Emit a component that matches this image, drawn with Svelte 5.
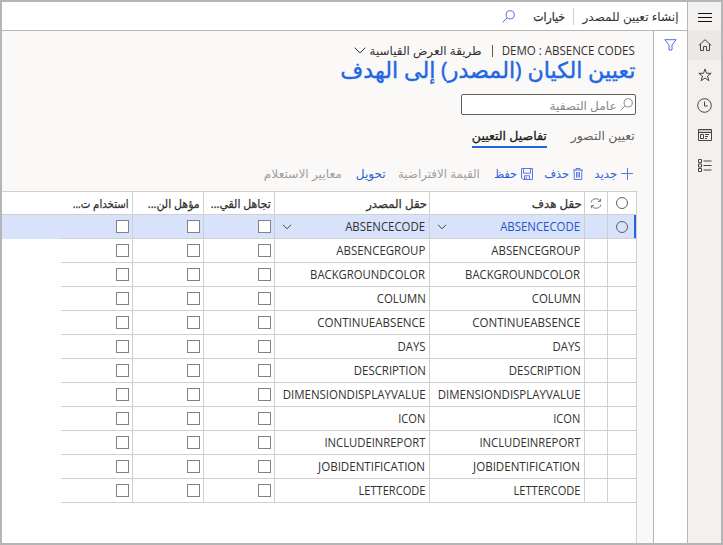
<script>
  const rows = [
    ['ABSENCECODE', 80], ['ABSENCEGROUP', 89], ['BACKGROUNDCOLOR', 115], ['COLUMN', 49],
    ['CONTINUEABSENCE', 108], ['DAYS', 28], ['DESCRIPTION', 72], ['DIMENSIONDISPLAYVALUE', 143],
    ['ICON', 27], ['INCLUDEINREPORT', 101], ['JOBIDENTIFICATION', 107], ['LETTERCODE', 67]
  ];

  // Condenses a label horizontally so that it fills its box exactly.
  function fit(node, width) {
    node.style.transform = `scaleX(${width / node.getBoundingClientRect().width})`;
  }
</script>

{#snippet label(text, width)}
  <span class="label" style="width:{width}px"><span class="ink" use:fit={width}>{text}</span></span>
{/snippet}

{#snippet chevron()}
  <svg class="chev" width="10" height="6" viewBox="0 0 10 6"><path d="M1 .8 5 4.8 9 .8" /></svg>
{/snippet}

{#snippet search()}
  <svg width="13" height="13" viewBox="0 0 13 13"><circle cx="8.2" cy="4.8" r="4.1" /><path d="M5.2 7.8.6 12.4" /></svg>
{/snippet}

<div class="window" dir="rtl">
  <nav class="rail">
    <div class="menu"><svg width="14" height="10" viewBox="0 0 14 10"><path d="M0 .5h14M0 4.5h14M0 8.5h14" /></svg></div>
    <div class="item home"><svg width="14" height="14" viewBox="0 0 14 14"><path d="M.7 7.5 7 1.7 13.3 7.5M2.5 6.1v6.4h3V8.5h3v4h3V6.1" /></svg></div>
    <div class="item"><svg width="14" height="14" viewBox="0 0 14 14"><path d="M7 .9 8.5 5.3h4.7L9.5 8.1l1.4 4.7L7 10l-3.9 2.8 1.4-4.7L.8 5.3h4.7Z" /></svg></div>
    <div class="item"><svg width="15" height="15" viewBox="0 0 15 15"><circle cx="7.5" cy="7.5" r="6.8" /><path d="M7.5 3.5v4.5h3.2" /></svg></div>
    <div class="item"><svg width="14" height="12" viewBox="0 0 14 12"><path class="thin" d="M0 1.8h14" /><path d="M.5.5h13v11H.5ZM.5 3.5h13M2.5 5.5h3v4h-3ZM7 5.5h4M7 7.5h3M7 9.5h2" /></svg></div>
    <div class="item"><svg width="14" height="13" viewBox="0 0 14 13"><path d="M.5.5h3v3h-3ZM.5 5h3v3h-3ZM.5 9.5h3v3h-3ZM5.5 2h8M5.5 6.5h8M5.5 11h8" /></svg></div>
  </nav>

  <div class="body">
    <header class="actions">
      <span class="create">{@render label('إنشاء تعيين للمصدر', 96)}</span>
      <span class="rule"></span>
      <span class="options">{@render label('خيارات', 32)}</span>
      <span class="find">{@render search()}</span>
    </header>

    <div class="content">
      <aside class="filter"><svg width="13" height="12" viewBox="0 0 13 12"><path d="M.8.7h11.4L8 6v5H5V6Z" /></svg></aside>

      <main>
        <div class="crumbs">
          {@render label('DEMO : ABSENCE CODES', 133)}
          <span class="bar"></span>
          {@render label('طريقة العرض القياسية', 112)}
          <svg width="12" height="7" viewBox="0 0 12 7"><path d="M.7.7 6 5.9 11.3.7" /></svg>
        </div>
        <h1>{@render label('تعيين الكيان (المصدر) إلى الهدف', 295)}</h1>
        <div class="quick">{@render search()}{@render label('عامل التصفية', 67)}</div>
        <div class="tabs">
          <span class="tab">{@render label('تعيين التصور', 64)}</span>
          <span class="tab active">{@render label('تفاصيل التعيين', 75)}</span>
        </div>
        <div class="tools">
          <span class="tool"><svg width="12" height="12" viewBox="0 0 12 12"><path d="M6.5 0v12M0 5.5h12" /></svg>{@render label('جديد', 23)}</span>
          <span class="tool trash"><svg width="10" height="12" viewBox="0 0 10 12"><path d="M0 2h10M3 2V.5h4V2M1.2 2v9.5h7.6V2M3.5 4v5.5M5 4v5.5M6.5 4v5.5" /></svg>{@render label('حذف', 25)}</span>
          <span class="tool"><svg width="12" height="12" viewBox="0 0 12 12"><path d="M.5.5h11v11H2L.5 10ZM2.5.5v4.7h7V.5M3.5 11.5V7.8h5v3.7M5.2 9v2.5" /></svg>{@render label('حفظ', 23)}</span>
          <span class="tool off">{@render label('القيمة الافتراضية', 82)}</span>
          <span class="tool">{@render label('تحويل', 30)}</span>
          <span class="tool off">{@render label('معايير الاستعلام', 78)}</span>
        </div>

        <section class="grid">
          <div class="row head">
            <div class="pick"><i class="radio"></i></div>
            <div class="sync"><svg width="12" height="11" viewBox="0 0 12 11"><path d="M1 4.5C1.5 2 3.5.8 6 .8c2 0 3.5.8 4.5 2.5V.8M10.5 3.4H8M11 6.5C10.5 9 8.5 10.2 6 10.2c-2 0-3.5-.8-4.5-2.5v2.5M1.5 7.6H4" /></svg></div>
            <div class="field">{@render label('حقل هدف', 50)}</div>
            <div class="field">{@render label('حقل المصدر', 61)}</div>
            <div class="check">{@render label('تجاهل القي...', 60)}</div>
            <div class="check">{@render label('مؤهل الن...', 52)}</div>
            <div class="check end">{@render label('استخدام ت...', 56)}</div>
          </div>
          {#each rows as [name, width], i}
            <div class="row" class:selected={i === 0}>
              <div class="pick">{#if i === 0}<i class="radio"></i>{/if}</div>
              <div class="sync"></div>
              <div class="field target">{@render label(name, width)}{#if i === 0}{@render chevron()}{/if}</div>
              <div class="field">{@render label(name, width)}{#if i === 0}{@render chevron()}{/if}</div>
              <div class="check"><i class="box"></i></div>
              <div class="check"><i class="box"></i></div>
              <div class="check end"><i class="box"></i></div>
            </div>
          {/each}
        </section>
      </main>
    </div>
  </div>
</div>

<style>
  :global(body) { margin: 0; }
  .window {
    box-sizing: border-box; width: 723px; height: 545px; display: flex; overflow: hidden;
    border: 2px solid #b5b5b5; background: #fff; color: #323130;
    font: 12px/16px "Open Sans", "DejaVu Sans", sans-serif;
  }
  svg { display: block; flex: none; fill: none; stroke: currentColor; stroke-width: 1; }
  .label { display: block; flex: none; white-space: nowrap; height: 16px; line-height: 16px; }
  .ink { display: inline-block; transform-origin: right center; }

  .rail { flex: none; width: 33px; background: #f2f1ef; border-left: 1px solid #b8b6b4; color: #484644; }
  .rail > div { display: flex; align-items: center; justify-content: center; height: 30px; }
  .rail .menu { height: 28px; padding-top: 4px; box-sizing: border-box; color: #111; }
  .rail .home { background: #eae9e7; }
  .rail .thin { stroke-width: 2; opacity: .25; }

  .body { flex: 1; min-width: 0; display: flex; flex-direction: column; }
  .actions { flex: none; height: 28px; display: flex; align-items: center; padding-right: 9px; border-bottom: 1px solid #b8b6b4; }
  .actions .label { margin-top: 2px; }
  .rule { width: 1px; height: 17px; margin: 0 8px; background: #d2d0ce; }
  .options { -webkit-text-stroke: .25px; }
  .find { margin-right: 18px; color: #4f6bed; }

  .content { flex: 1; min-height: 0; display: flex; }
  .filter { flex: none; width: 33px; border-left: 1px solid #b8b6b4; background: #fff; color: #5b6bea; display: flex; justify-content: center; padding-top: 8px; }
  main { flex: 1; min-width: 0; background: #faf9f8; display: flex; flex-direction: column; }

  .crumbs { display: flex; align-items: center; height: 16px; margin: 12px 18px 0 0; }
  .bar { width: 1px; height: 12px; margin: 0 9px 0 10px; background: #6b5a48; }
  .crumbs svg { margin: -2px 4px 0 0; }
  h1 { margin: 0 18px 0 0; height: 35px; font-size: 22px; font-weight: 400; color: #2266e3; -webkit-text-stroke: .4px #2266e3; }
  h1 :global(.label) { height: 20px; line-height: 20px; }
  .quick { box-sizing: border-box; width: 175px; height: 21px; margin: 0 17px 0 0; border: 1px solid #605e5c; border-radius: 2px; background: #fff; display: flex; align-items: center; padding-right: 2px; color: #8a8886; }
  .quick .label { margin: 2px 3px 0 0; }
  .tabs { display: flex; gap: 24px; height: 23px; margin: 10px 18px 0 0; color: #605e5c; }
  .tab { box-sizing: border-box; height: 23px; padding-top: 3px; }
  .tab.active { color: #1b1a19; -webkit-text-stroke: .3px; border-bottom: 2px solid #2266e3; }

  .tools { display: flex; height: 43px; padding: 18px 20px 0 0; box-sizing: border-box; color: #2b5fd9; }
  .tool { display: flex; align-items: center; gap: 4px; height: 16px; margin-left: 12px; }
  .tool:first-child, .tool.trash { margin-left: 11px; }
  .tool svg { color: #5a78e0; }
  .tool:nth-child(3), .tool:nth-child(5) { margin-left: 14px; }
  .tool.off { color: #a19f9d; }

  .grid { flex: 1; margin-right: 16px; background: #fff; border-top: 1px solid #d0d0d0; border-right: 1px solid #d0d0d0; }
  .row { display: flex; height: 24px; }
  .row > div { box-sizing: border-box; display: flex; align-items: center; border-left: 1px solid #d0d0d0; border-bottom: 1px solid #d0d0d0; }
  .row .pick { width: 29px; justify-content: center; }
  .row .sync { width: 23px; justify-content: center; color: #777; }
  .row .field { width: 155px; padding-right: 3.5px; justify-content: space-between; }
  .row .check { width: 71px; padding-right: 3px; }
  .row .end { border-left-width: 0; }
  .head { height: 23px; border-bottom: 1px solid #d0d0d0; box-sizing: border-box; -webkit-text-stroke: .25px; }
  .row.head > div { border-bottom: 0; }
  .row.head .field { padding-right: 2px; }
  .head .label { margin-top: 1px; }
  .selected { background: #d8e3fb; }
  .selected .pick { box-shadow: inset -2px 0 #2266e3; }
  .selected .target .label { color: #1f55c4; }
  .chev { margin-left: 7px; color: #444; }
  .radio { width: 10px; height: 10px; border: 1px solid #605e5c; border-radius: 50%; }
  .box { width: 11px; height: 11px; border: 1px solid #828282; background: #fff; }
</style>
